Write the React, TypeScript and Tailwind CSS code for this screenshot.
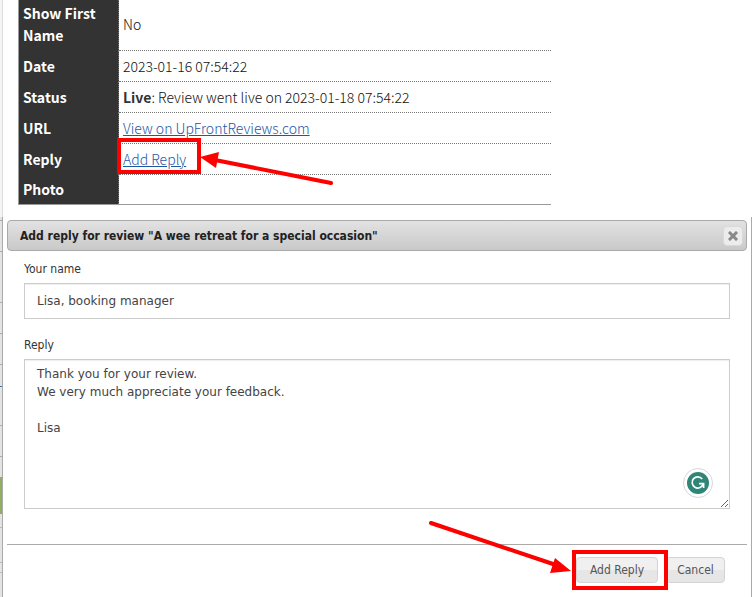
import type { ReactNode } from "react";

interface RowProps {
  label: string;
  children?: ReactNode;
  last?: boolean;
}

function Row({ label, children, last = false }: RowProps) {
  return (
    <tr>
      <th
        scope="row"
        className="w-[100px] border-r border-dotted border-[#777] bg-[#333] px-1 py-1 text-left align-middle font-bold text-white"
      >
        {label}
      </th>
      <td
        className={
          last
            ? "px-1 py-1 align-middle"
            : "border-b border-dotted border-[#777] px-1 py-1 align-middle"
        }
      >
        {children}
      </td>
    </tr>
  );
}

function ReviewDetails() {
  return (
    <table className="-mt-0.5 ml-[15px] w-[533px] border-collapse border-b border-l border-[#999] font-['Noto_Sans_CJK_JP','Noto_Sans',sans-serif] text-[14px] leading-[22px] font-light text-[#111]">
      <tbody>
        <Row label="Show First Name">No</Row>
        <Row label="Date">2023-01-16 07:54:22</Row>
        <Row label="Status">
          <b className="font-bold text-[#333]">Live</b>: Review went live on 2023-01-18 07:54:22
        </Row>
        <Row label="URL">
          <a href="#review" className="text-[#1f57a8] underline">
            View on UpFrontReviews.com
          </a>
        </Row>
        <Row label="Reply">
          <span className="relative inline-block">
            <a href="#reply" className="text-[#1f57a8] underline">
              Add Reply
            </a>
            <span className="pointer-events-none absolute -top-[10px] -left-1.5 h-9 w-[84px] border-4 border-[#f00]" />
            <svg
              className="pointer-events-none absolute -top-px left-[76px] overflow-visible"
              width="134"
              height="40"
              aria-hidden="true"
            >
              <path d="M16 13 L132 36" stroke="#f00" strokeWidth="4" strokeLinecap="round" />
              <path d="M1 10 L20 5 L17 21Z" fill="#f00" />
            </svg>
          </span>
        </Row>
        <Row label="Photo" last />
      </tbody>
    </table>
  );
}

function GrammarBadge() {
  return (
    <span className="pointer-events-none absolute right-[17px] bottom-[11px] flex size-[30px] items-center justify-center rounded-full border border-[#d5d7e2] bg-white">
      <svg width="22" height="22" viewBox="0 0 22 22" aria-hidden="true">
        <circle cx="11" cy="11" r="11" fill="#2f8576" />
        <path
          d="M15.2 7A5.6 5.6 0 1 0 16 12.4"
          fill="none"
          stroke="#fff"
          strokeWidth="1.7"
        />
        <path d="M12 11.6H16.6V16" fill="none" stroke="#fff" strokeWidth="1.7" />
      </svg>
    </span>
  );
}

function ReplyDialog() {
  const buttonClass =
    "h-[26px] rounded border border-[#d3d3d3] bg-linear-to-b from-[#f0f0f0] from-50% to-[#e6e6e6] to-50% text-[12px] leading-4 text-[#555]";

  return (
    <form
      role="dialog"
      aria-labelledby="dialog-title"
      className="border-r border-[#aaa] py-[3px] pr-1 pl-1 font-['DejaVu_Sans_Condensed','DejaVu_Sans',sans-serif] text-[12px] leading-4 text-[#333]"
      onSubmit={(e) => e.preventDefault()}
    >
      <div className="flex h-[31px] items-center justify-between rounded border border-[#aaa] bg-linear-to-b from-[#e2e2e2] to-[#c9c9c9] pr-[3px] pl-3">
        <h2 id="dialog-title" className="text-[12px] font-bold text-[#222]">
          Add reply for review "A wee retreat for a special occasion"
        </h2>
        <button
          type="button"
          aria-label="Close"
          className="flex size-5 items-center justify-center rounded border border-[#d9d9d9] bg-[#ececec]"
        >
          <svg width="10" height="10" viewBox="0 0 10 10" aria-hidden="true">
            <path d="M2 2L8 8M8 2L2 8" stroke="#888" strokeWidth="3" strokeLinecap="square" />
          </svg>
        </button>
      </div>

      <div className="px-[17px] pt-[10px] pb-[35px]">
        <label htmlFor="name" className="block">
          Your name
        </label>
        <input
          id="name"
          type="text"
          defaultValue="Lisa, booking manager"
          className="mt-1.5 block h-9 w-full border border-[#ccc] bg-white px-3 font-['DejaVu_Sans',sans-serif] text-[12px] text-[#444] shadow-[inset_0_1px_1px_#eee]"
        />
        <label htmlFor="reply" className="mt-[18px] block">
          Reply
        </label>
        <div className="relative mt-1.5">
          <textarea
            id="reply"
            defaultValue={
              "Thank you for your review.\nWe very much appreciate your feedback.\n\nLisa"
            }
            className="block h-[150px] w-full border border-[#ccc] bg-white px-3 py-[5px] font-['DejaVu_Sans',sans-serif] text-[12px] leading-[18px] text-[#444] shadow-[inset_0_1px_1px_#eee]"
          />
          <GrammarBadge />
        </div>
      </div>

      <div className="flex justify-end gap-2 border-t border-[#aaa] pt-3 pr-[22px] pb-3">
        <div className="relative">
          <button type="submit" className={`${buttonClass} w-[82px]`}>
            Add Reply
          </button>
          <span className="pointer-events-none absolute -top-[7px] -left-1 h-10 w-24 border-4 border-[#f00]" />
          <svg
            className="pointer-events-none absolute top-[-35px] left-[-146px] overflow-visible"
            width="142"
            height="52"
            aria-hidden="true"
          >
            <path d="M1 1 L126 43" stroke="#f00" strokeWidth="4" strokeLinecap="round" />
            <path d="M141 49 L125 36 L120 51Z" fill="#f00" />
          </svg>
        </div>
        <button type="button" className={`${buttonClass} w-[59px]`}>
          Cancel
        </button>
      </div>
    </form>
  );
}

// Sliver of the page that stays visible beside the dialog
function PageEdge() {
  return (
    <div className="flex w-[3px] shrink-0 flex-col">
      <div className="h-[217px] border-r border-[#ddd] bg-[#f5f5f5]" />
      <div className="flex grow flex-col border-r border-[#aaa] bg-[#e3e3e3]">
        <div className="mt-[3px] h-8 border-y border-[#aaa]" />
        <div className="h-[51px] border-b border-[#aaa]" />
        <div className="h-[31px] border-b border-[#aaa]" />
        <div className="h-[31px] border-b border-[#aaa]" />
        <div className="h-[22px] border-b border-[#3a70b8]" />
        <div className="h-[39px] border-b border-[#aaa]" />
        <div className="h-[31px] border-b border-[#aaa]" />
        <div className="mt-5 h-[37px] bg-[#90ae61]" />
        <div className="h-3.5 border-b border-[#bbb]" />
        <div className="h-[35px] border-b border-[#bbb]" />
        <div className="h-2.5 border-b border-[#bbb]" />
      </div>
    </div>
  );
}

export default function App() {
  return (
    <div className="flex min-h-screen overflow-hidden bg-white">
      <PageEdge />
      <main className="flex min-w-0 grow flex-col">
        <div className="pb-3">
          <ReviewDetails />
        </div>
        <ReplyDialog />
      </main>
    </div>
  );
}
